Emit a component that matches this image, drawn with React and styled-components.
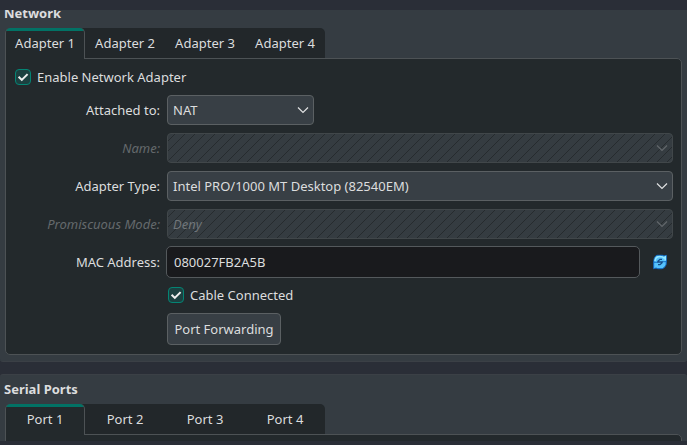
import React from "react";
import styled, { createGlobalStyle, css } from "styled-components";

const Global = createGlobalStyle`
  *, *::before, *::after { box-sizing: border-box; }
  html, body { margin: 0; background: #2a2e38; overflow: hidden; }
  body { font: 13px/18px "Noto Sans", sans-serif; color: #dcddde; }
  button, input { font: inherit; color: inherit; }
`;

const Window = styled.main`
  width: 687px;
  height: 445px;
  padding: 10px 0 4px;
  display: flex;
  flex-direction: column;
  gap: 12px;
  background: #2a2e37;
  overflow: hidden;
`;

const Section = styled.section`
  height: ${(p) => p.$height}px;
  flex: none;
  display: flex;
  flex-direction: column;
  padding: 0 5px;
  background: #353c42;
  border: solid #3b4046;
  border-width: ${(p) => (p.$clipped ? "1px 0 0" : "0 0 1px")};
  border-radius: ${(p) => (p.$clipped ? "3px 3px 0 0" : "0 0 3px 3px")};
  overflow: hidden;
`;

const Title = styled.h2`
  height: 18px;
  flex: none;
  margin: ${(p) => p.$top}px 0 ${(p) => p.$bottom}px -1px;
  font-size: 13px;
  line-height: 18px;
  font-weight: 700;
`;

const TabBar = styled.div`
  width: 320px;
  height: 31px;
  flex: none;
  display: flex;
  margin-bottom: -1px;
  background: #22272a;
  border-radius: 5px 5px 0 0;
  z-index: 1;
`;

const Tab = styled.button`
  width: 80px;
  height: 31px;
  padding: 0;
  border: 0;
  border-bottom: 1px solid #4d5255;
  background: transparent;
  ${(p) =>
    p.$active &&
    css`
      padding-bottom: 1px;
      border: solid #4d5255;
      border-width: 0 1px;
      border-radius: 5px 5px 0 0;
      background: linear-gradient(#027265 3px, #23292c 3px);
    `}
`;

const Panel = styled.div`
  height: 297px;
  flex: none;
  padding: 10px 8px 9px 9px;
  border: 1px solid #4d5255;
  border-radius: 0 5px 5px 5px;
  background: #23292c;
`;

const CheckRow = styled.label`
  height: 16px;
  display: flex;
  align-items: center;
  gap: 6px;
  margin-left: ${(p) => p.$indent || 0}px;
`;

const CheckBox = styled.span`
  width: 16px;
  height: 16px;
  display: grid;
  place-items: center;
  border: 1px solid #048474;
  border-radius: 4px;
  background: #1c4040;
`;

const Form = styled.div`
  display: grid;
  grid-template-columns: 145px 506px;
  grid-template-rows: repeat(4, 30px);
  gap: 8px 7px;
  margin-top: 10px;
`;

const MacRow = styled.div`
  display: grid;
  grid-template-columns: 145px 474px 16px;
  align-items: center;
  height: 32px;
  margin: 7px 0 9px;
  column-gap: 6px;
`;

const Label = styled.span`
  align-self: center;
  text-align: right;
  white-space: nowrap;
  ${(p) =>
    p.$disabled &&
    css`
      color: #65696c;
      font-style: italic;
    `}
`;

const Combo = styled.button`
  width: ${(p) => p.$width || 506}px;
  height: 30px;
  display: flex;
  align-items: center;
  justify-content: space-between;
  padding: 0 4px 0 5px;
  border: 1px solid #5b6063;
  border-radius: 4px;
  background: #383f45;
  text-align: left;
  ${(p) =>
    p.$disabled &&
    css`
      border-color: #41474a;
      color: #70767a;
      font-style: italic;
      background: linear-gradient(
          135deg,
          #262b2e 0 0.1px,
          transparent 0.7px 6.37px,
          #262b2e 6.97px 7.17px,
          transparent 7.77px 13.44px,
          #262b2e 14.04px
        )
        7px 0 / 10px 10px #353c41;
    `}
`;

const TextField = styled.input`
  width: 474px;
  height: 32px;
  padding: 0 7px;
  border: 1px solid #54595c;
  border-radius: 5px;
  background: #191a1d;
  outline: 0;
`;

const IconButton = styled.button`
  width: 16px;
  height: 16px;
  display: grid;
  margin-left: 6px;
  padding: 0;
  border: 0;
  background: none;
`;

const PushButton = styled.button`
  width: 114px;
  height: 32px;
  display: block;
  margin: 10px 0 0 152px;
  padding: 0;
  border: 1px solid #5b6063;
  border-radius: 4px;
  background: #383f45;
  white-space: nowrap;
`;

const Check = () => (
  <CheckBox>
    <svg width="14" height="14" viewBox="0 0 14 14">
      <path d="M2.6 6.7 5.8 9.9 11.6 4.1" fill="none" stroke="#eeeeee" strokeWidth="2" />
    </svg>
  </CheckBox>
);

const Chevron = ({ color }) => (
  <svg width="12" height="8" viewBox="0 0 12 8">
    <path d="M1 1.5 6 6.5 11 1.5" fill="none" stroke={color} strokeWidth="1.2" />
  </svg>
);

const RefreshIcon = () => (
  <svg width="16" height="16" viewBox="0 0 16 16">
    <path
      d="M5.2 1.3H10.5L12 2 14.3 1.3V8.2L14 11 12.3 13.5 10.2 14.7H5.8L4 14 1.7 14.8V7.8L2.2 4.6 3.5 2.2Z"
      fill="#55c2fc"
      stroke="#1269c4"
      strokeWidth="1"
      strokeLinejoin="round"
    />
    <path d="M3 7C3.3 3.9 5 2.5 8 2.5 10 2.5 11.2 3.2 12 4L13.3 3V6.5" fill="none" stroke="#96e8ff" strokeWidth="1.6" />
    <path d="M1.7 8.3H5.8M10.2 7.7H14.3" stroke="#1269c4" strokeWidth="0.9" />
    <path d="M10 5.3H8L5.9 7.2V8H10.1V8.8L8 10.7H6" fill="none" stroke="#164b88" strokeWidth="1.3" />
  </svg>
);

const Select = ({ label, value, width, disabled }) => (
  <>
    <Label $disabled={disabled}>{label}</Label>
    <Combo $width={width} $disabled={disabled} aria-disabled={disabled}>
      <span>{value}</span>
      <Chevron color={disabled ? "#62676b" : "#e0e1e2"} />
    </Combo>
  </>
);

const Tabs = ({ name }) => (
  <TabBar>
    {[1, 2, 3, 4].map((n) => (
      <Tab key={n} $active={n === 1}>
        {name} {n}
      </Tab>
    ))}
  </TabBar>
);

export default function App() {
  return (
    <>
      <Global />
      <Window>
        <Section $height={352}>
          <Title $top={-6} $bottom={6}>Network</Title>
          <Tabs name="Adapter" />
          <Panel>
            <CheckRow>
              <Check />
              Enable Network Adapter
            </CheckRow>
            <Form>
              <Select label="Attached to:" value="NAT" width={147} />
              <Select label="Name:" value="" disabled />
              <Select label="Adapter Type:" value="Intel PRO/1000 MT Desktop (82540EM)" />
              <Select label="Promiscuous Mode:" value="Deny" disabled />
            </Form>
            <MacRow>
              <Label>MAC Address:</Label>
              <TextField defaultValue="080027FB2A5B" spellCheck={false} />
              <IconButton aria-label="Generate new MAC address">
                <RefreshIcon />
              </IconButton>
            </MacRow>
            <CheckRow $indent={153}>
              <Check />
              Cable Connected
            </CheckRow>
            <PushButton>Port Forwarding</PushButton>
          </Panel>
        </Section>
        <Section $height={67} $clipped>
          <Title $top={5} $bottom={6}>Serial Ports</Title>
          <Tabs name="Port" />
          <Panel />
        </Section>
      </Window>
    </>
  );
}
